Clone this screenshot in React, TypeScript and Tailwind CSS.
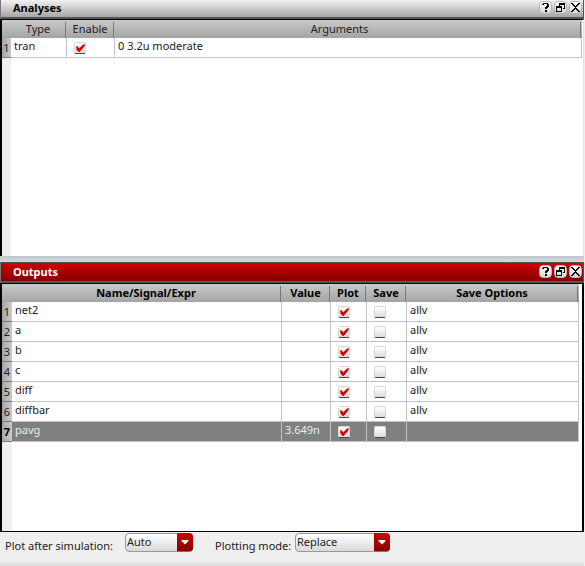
import { useState } from "react";
import type { ReactNode } from "react";

const headBg = "bg-linear-to-b from-[#cacaca] to-[#a4a4a4]";
const cell = "border-r border-b border-[#c3c3c3] p-0";

function TitleButton({ label, children }: { label: string; children: ReactNode }) {
  return (
    <button
      type="button"
      aria-label={label}
      className="flex size-[13px] items-center justify-center rounded-[4px] border border-[#b4b4b4] bg-linear-to-b from-white to-[#d8d8d8]"
    >
      <svg viewBox="0 0 9 9" className="size-[9px] shrink-0" shapeRendering="crispEdges" aria-hidden="true">
        {children}
      </svg>
    </button>
  );
}

function TitleBar({ title, active }: { title: string; active?: boolean }) {
  const tone = active
    ? "h-[21px] bg-linear-to-b from-[#cf0000] to-[#840000] text-white border-t border-t-[#555] pb-px"
    : "h-[19px] bg-linear-to-b from-[#f2f2f2] to-[#a6a6a6] text-black pb-0.5";
  return (
    <header className={`flex shrink-0 items-center border-x border-b-2 border-b-[#555] border-l-[#777] border-r-[#555] pl-3 ${tone}`}>
      <h2 className="flex-1 text-[11px] leading-4 font-bold">{title}</h2>
      <div className="flex gap-0.5 pr-px">
        <TitleButton label="Help">
          <path d="M2 0h5v1h1v3h-1v1h-1v1h-2v-2h1v-1h1v-2h-3v1h-2v-1h1zM4 7h2v2h-2z" fill="#000" />
        </TitleButton>
        <TitleButton label="Float">
          <path d="M3 0h6v6h-2v-1h1v-3h-4v1h-1zM0 3h6v6h-6zM1 5v3h4v-3z" fill="#000" fillRule="evenodd" />
        </TitleButton>
        <TitleButton label="Close">
          <path
            d="M0 0h2v1h1v1h1v1h1v-1h1v-1h1v-1h2v1h-1v1h-1v1h-1v1h-1v1h1v1h1v1h1v1h1v1h-2v-1h-1v-1h-1v-1h-1v1h-1v1h-1v1h-2v-1h1v-1h1v-1h1v-1h1v-1h-1v-1h-1v-1h-1v-1h-1z"
            fill="#000"
          />
        </TitleButton>
      </div>
    </header>
  );
}

function Check({ label, initial }: { label: string; initial: boolean }) {
  const [on, setOn] = useState(initial);
  return (
    <label className="mt-px ml-[7px] grid size-3">
      <input
        type="checkbox"
        aria-label={label}
        checked={on}
        onChange={() => setOn(!on)}
        className="col-start-1 row-start-1 size-3 appearance-none rounded-[2px] border border-[#d8d8d8] border-b-[#444] bg-linear-to-b from-white to-[#dcdcdc]"
      />
      {on && (
        <svg viewBox="0 0 12 12" className="pointer-events-none col-start-1 row-start-1 size-3" aria-hidden="true">
          <path d="M2.2 4L4.2 4.8L5.2 6.6L9 2.4L10.8 2L10.4 4.6L5.6 10L4.4 9.8L2.4 7.4Z" fill="#d40000" />
        </svg>
      )}
    </label>
  );
}

function Head({ children, bold, className = "" }: { children: ReactNode; bold?: boolean; className?: string }) {
  return (
    <th scope="col" className={`h-[18px] p-0 ${bold ? "font-bold text-black" : "font-normal text-[#222]"}`}>
      <div className={`mt-0.5 mr-px h-4 border-r border-[#777] text-center leading-[13px] ${className}`}>{children}</div>
    </th>
  );
}

function RowNumber({ n, selected }: { n: number; selected?: boolean }) {
  return (
    <th
      scope="row"
      className={`h-5 border-b border-[#777] bg-linear-to-r from-[#a6a6a6] to-[#cacaca] p-0 text-center leading-[15px] ${selected ? "font-bold text-black" : "font-normal text-[#222]"}`}
    >
      {n}
    </th>
  );
}

const text = "h-[15px] pl-[3px] leading-[15px] mb-1";

const outputs = [
  { name: "net2", value: "", options: "allv" },
  { name: "a", value: "", options: "allv" },
  { name: "b", value: "", options: "allv" },
  { name: "c", value: "", options: "allv" },
  { name: "diff", value: "", options: "allv" },
  { name: "diffbar", value: "", options: "allv" },
  { name: "pavg", value: "3.649n", options: "" },
];

function Picker({ id, options, width }: { id: string; options: string[]; width: string }) {
  return (
    <div className={`grid h-[19px] ${width}`}>
      <select
        id={id}
        className="col-start-1 row-start-1 appearance-none rounded-[4px] border border-[#999] bg-linear-to-b from-white to-[#dadada] pr-4 pb-px pl-px text-[11px] leading-4 text-[#222]"
      >
        {options.map((o) => (
          <option key={o}>{o}</option>
        ))}
      </select>
      <span className="pointer-events-none col-start-1 row-start-1 flex w-4 items-center justify-center justify-self-end rounded-r-[4px] border-b border-[#777] bg-linear-to-b from-[#d00000] to-[#860000]">
        <svg viewBox="0 0 8 5" className="h-[5px] w-2" aria-hidden="true">
          <path d="M0.5 0H7.5V1L4 4.5L0.5 1Z" fill="#fff" />
        </svg>
      </span>
    </div>
  );
}

export default function App() {
  return (
    <main className="flex min-h-screen flex-col bg-[#efefef] pr-px font-['Noto_Sans','Open_Sans',sans-serif] text-[11px] text-[#222]">
      <section className="flex flex-col">
        <TitleBar title="Analyses" />
        <div className="min-h-[237px] border-t border-r border-l-2 border-t-black border-r-[#e0e0e0] border-l-black bg-[linear-gradient(to_right,#efefef_9px,#fff_9px)] pr-px">
          <table className="w-full table-fixed border-separate border-spacing-0">
            <colgroup>
              <col className="w-[9px]" />
              <col className="w-14" />
              <col className="w-12" />
              <col />
            </colgroup>
            <thead>
              <tr className={headBg}>
                <td className="p-0" />
                <Head>Type</Head>
                <Head>Enable</Head>
                <Head className="pr-4">Arguments</Head>
              </tr>
            </thead>
            <tbody>
              <tr>
                <RowNumber n={1} />
                <td className={cell}><div className={text}>tran</div></td>
                <td className={cell}><Check label="Enable tran" initial /></td>
                <td className={cell}><div className={text}>0 3.2u moderate</div></td>
              </tr>
            </tbody>
          </table>
        </div>
      </section>
      <div className="h-1.5 shrink-0 bg-linear-to-b from-[#c4c6c9] to-[#d6d8dc]" />
      <section className="flex flex-1 flex-col">
        <TitleBar title="Outputs" active />
        <div className="flex-1 border-t border-r-2 border-b border-l-2 border-black bg-[linear-gradient(to_right,#efefef_10px,#fff_10px)] pr-[3px]">
          <table className="w-full table-fixed border-separate border-spacing-0">
            <colgroup>
              <col className="w-[10px]" />
              <col />
              <col className="w-[49px]" />
              <col className="w-9" />
              <col className="w-10" />
              <col className="w-[172px]" />
            </colgroup>
            <thead>
              <tr className={headBg}>
                <td className="p-0" />
                <Head bold>Name/Signal/Expr</Head>
                <Head bold>Value</Head>
                <Head bold>Plot</Head>
                <Head bold>Save</Head>
                <Head bold>Save Options</Head>
              </tr>
            </thead>
            <tbody>
              {outputs.map((o, i) => {
                const selected = o.name === "pavg";
                return (
                  <tr key={o.name} className={selected ? "bg-[#808080] text-[#e2f0f0]" : ""}>
                    <RowNumber n={i + 1} selected={selected} />
                    <td className={cell}><div className={text}>{o.name}</div></td>
                    <td className={cell}><div className={text}>{o.value}</div></td>
                    <td className={cell}><Check label={`Plot ${o.name}`} initial /></td>
                    <td className={cell}><Check label={`Save ${o.name}`} initial={false} /></td>
                    <td className={cell}><div className={text}>{o.options}</div></td>
                  </tr>
                );
              })}
            </tbody>
          </table>
        </div>
      </section>
      <footer className="flex h-[34px] shrink-0 items-start border-b-3 border-[#e0e0e0] pt-px pl-[5px]">
        <label htmlFor="after" className="w-[120px] pt-[5px] leading-4">Plot after simulation:</label>
        <Picker id="after" options={["Auto", "Append", "Replace"]} width="w-[68px]" />
        <label htmlFor="mode" className="ml-[22px] w-20 pt-[5px] leading-4 whitespace-nowrap">Plotting mode:</label>
        <Picker id="mode" options={["Replace", "Append", "New Window"]} width="w-[95px]" />
      </footer>
    </main>
  );
}
